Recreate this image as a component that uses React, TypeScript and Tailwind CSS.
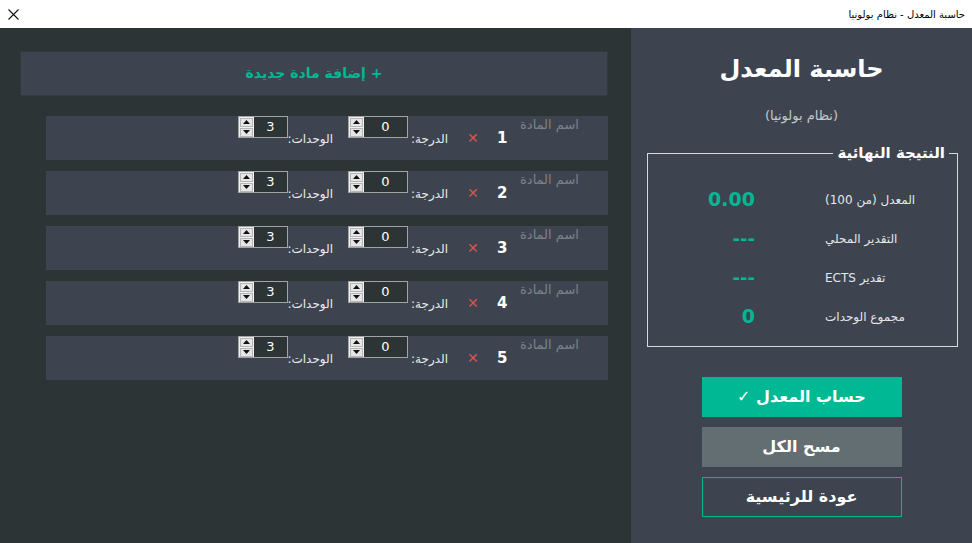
const subjects = [1, 2, 3, 4, 5];

function SpinBox({ value, width }: { value: string; width: string }) {
  return (
    <div className={`flex h-[22px] border border-[#a3a3a3] bg-[#2d3436] ${width}`}>
      <div className="flex w-[15px] flex-col justify-center gap-[1px] bg-[#f0f0f0] px-[1px]">
        <div className="flex h-[9px] items-center justify-center border border-[#b5b5b5] bg-[#e6e6e6]">
          <svg width="7" height="4" viewBox="0 0 7 4">
            <path d="M0 4 L3.5 0 L7 4 Z" fill="#111" />
          </svg>
        </div>
        <div className="flex h-[9px] items-center justify-center border border-[#b5b5b5] bg-[#e6e6e6]">
          <svg width="7" height="4" viewBox="0 0 7 4">
            <path d="M0 0 L3.5 4 L7 0 Z" fill="#111" />
          </svg>
        </div>
      </div>
      <div className="flex flex-1 items-center justify-center text-[13px] text-white">{value}</div>
    </div>
  );
}

function SubjectRow({ n }: { n: number }) {
  return (
    <div className="ml-[26px] flex h-[44px] items-start bg-[#3d4450]">
      <div className="ml-[192px]">
        <SpinBox value="3" width="w-[50px]" />
      </div>
      <span dir="rtl" className="ml-[3px] mt-[16px] w-[42px] text-[12px] leading-[14px] text-[#e8ecee]">
        الوحدات:
      </span>
      <div className="ml-[15px]">
        <SpinBox value="0" width="w-[60px]" />
      </div>
      <span dir="rtl" className="ml-[4px] mt-[16px] w-[36px] text-[12px] leading-[14px] text-[#e8ecee]">
        الدرجة:
      </span>
      <span className="ml-[19px] mt-[14px] w-[12px] text-[14px] leading-[16px] text-[#d9534f]">✕</span>
      <span className="ml-[18px] mt-[13px] w-[12px] text-[15px] font-bold leading-[18px] text-white">{n}</span>
      <span dir="rtl" className="ml-[6px] mt-[1px] w-[64px] text-right text-[13px] leading-[16px] text-[#7b8288]">
        اسم المادة
      </span>
    </div>
  );
}

function ResultRow({ value, label, big }: { value: string; label: string; big?: boolean }) {
  return (
    <div className="flex h-[39px] items-center">
      <div className={`w-[107px] text-right font-bold text-[#00b894] ${big ? "text-[19px]" : "text-[18px]"}`}>{value}</div>
      <div dir="rtl" className="ml-[70px] text-left text-[12px] text-[#e3e7ea]">
        {label}
      </div>
    </div>
  );
}

export default function App() {
  return (
    <div className="flex h-[543px] w-[972px] flex-col overflow-hidden font-['DejaVu_Sans',sans-serif]">
      <div className="flex h-[28px] shrink-0 items-center justify-between bg-white pl-[8px] pr-[7px]">
        <svg width="11" height="11" viewBox="0 0 11 11">
          <path d="M0.5 0.5 L10.5 10.5 M10.5 0.5 L0.5 10.5" stroke="#111" strokeWidth="1.1" />
        </svg>
        <span dir="rtl" className="text-[10px] text-black">
          حاسبة المعدل - نظام بولونيا
        </span>
      </div>

      <div className="flex flex-1">
        <div className="flex w-[631px] flex-col bg-[#2d3436] pl-[20px] pr-[23px] pt-[23px]">
          <button className="flex h-[45px] items-center justify-center border border-[#333a3c] bg-[#3d4450] text-[14px] font-bold text-[#00b894]">
            <span dir="rtl">+ إضافة مادة جديدة</span>
          </button>
          <div className="mt-[20px] flex flex-col gap-[11px]">
            {subjects.map((n) => (
              <SubjectRow key={n} n={n} />
            ))}
          </div>
        </div>

        <div className="flex flex-1 flex-col items-center bg-[#3d4450] pt-[24px]">
          <h1 dir="rtl" className="text-[24px] font-bold leading-[34px] text-white">
            حاسبة المعدل
          </h1>
          <p dir="rtl" className="mt-[21px] text-[13px] leading-[18px] text-[#c2c9cd]">
            (نظام بولونيا)
          </p>

          <div className="relative mt-[28px] h-[194px] w-[311px] self-start ml-[16px] border border-[#d8d8d8] pt-[26px]">
            <span
              dir="rtl"
              className="absolute -top-[11px] right-[8px] bg-[#3d4450] px-[4px] text-[15px] font-bold leading-[20px] text-white"
            >
              النتيجة النهائية
            </span>
            <ResultRow value="0.00" label="المعدل (من 100)" big />
            <ResultRow value="---" label="التقدير المحلي" />
            <ResultRow value="---" label="تقدير ECTS" />
            <ResultRow value="0" label="مجموع الوحدات" big />
          </div>

          <div className="mt-[30px] flex flex-col gap-[10px]">
            <button className="flex h-[40px] w-[200px] items-center justify-center bg-[#00b894] text-[16px] font-bold text-white">
              <span dir="rtl">حساب المعدل ✓</span>
            </button>
            <button className="flex h-[40px] w-[200px] items-center justify-center bg-[#636e72] text-[16px] font-bold text-white">
              <span dir="rtl">مسح الكل</span>
            </button>
            <button className="flex h-[40px] w-[200px] items-center justify-center border border-[#00b894] text-[16px] font-bold text-white">
              <span dir="rtl">عودة للرئيسية</span>
            </button>
          </div>
        </div>
      </div>
    </div>
  );
}
